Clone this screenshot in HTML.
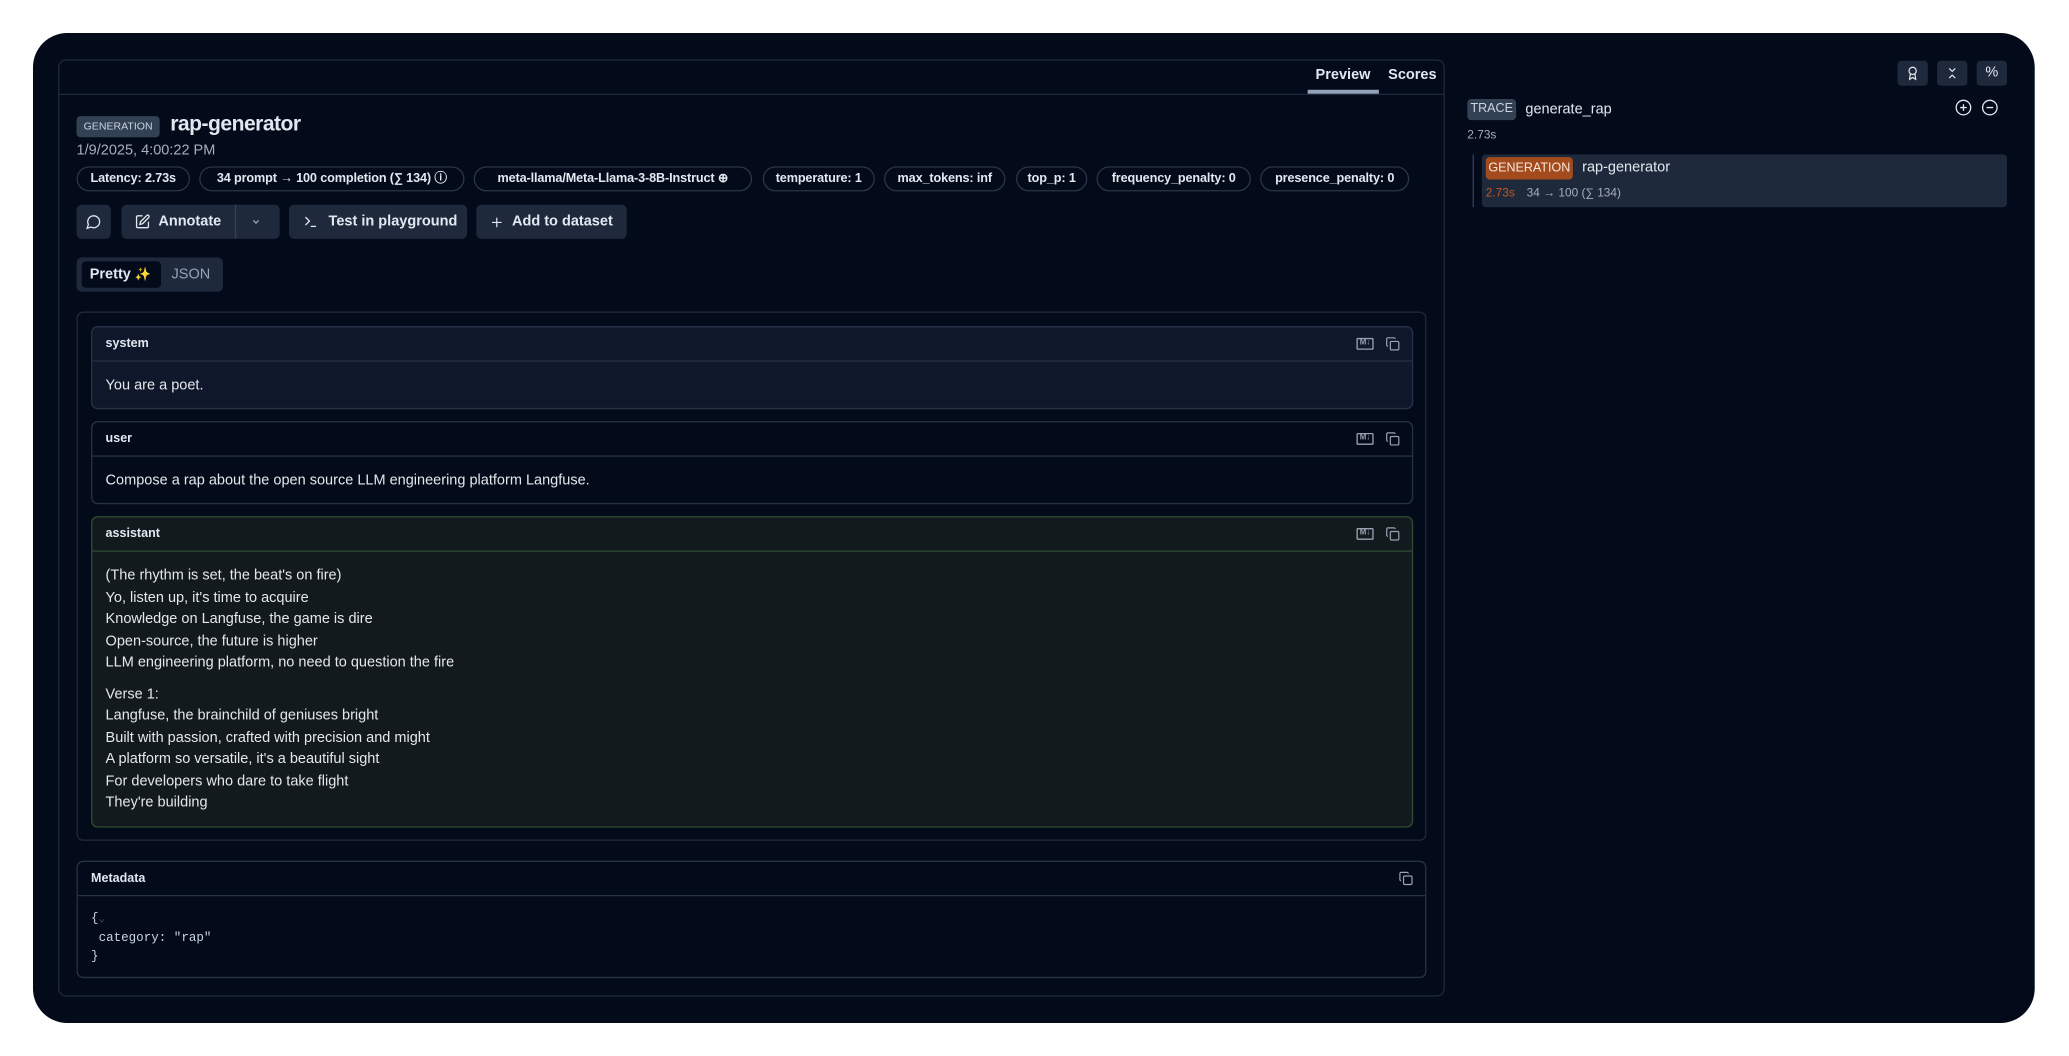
<!DOCTYPE html>
<html><head><meta charset="utf-8"><style>
*{box-sizing:border-box;margin:0;padding:0}
html,body{width:2069px;height:1056px;background:#fff;overflow:hidden}
#w{position:absolute;left:0;top:0;width:1568px;height:800px;transform:scale(1.31952,1.32);transform-origin:0 0;font-family:"Liberation Sans",sans-serif;color:#e2e8f0;white-space:nowrap}
.a{position:absolute}
.card{left:25px;top:25px;width:1517px;height:750px;background:#030a19;border-radius:26px}
.lp{left:44px;top:45px;width:1051px;height:710px;border:1px solid #1e293b;border-radius:6px}
.pill{position:absolute;top:126px;height:19px;border:1px solid #2a3547;border-radius:10px;font-size:9.6px;font-weight:bold;line-height:17px;text-align:center;color:#e2e8f0;letter-spacing:-0.1px}
.btn{position:absolute;top:155px;height:26px;background:#1e293b;border-radius:4px;font-size:11px;font-weight:bold;line-height:26px;color:#e2e8f0}
.box{position:absolute;left:69px;width:1002px;border:1px solid #263246;border-radius:5px}
.hd{height:26px;border-bottom:1px solid #263246;font-size:9.5px;font-weight:bold;padding-left:10px;line-height:25px;position:relative}
.bd{font-size:11px;padding-left:10px;color:#e5e7eb}
.ic{position:absolute;top:7px}
.md{right:29px;width:13px;height:9px;border:1px solid #9aa3b2;border-radius:1px;font-size:6px;line-height:7px;text-align:center;color:#9aa3b2;top:8px}
.cp{right:9px}
.ib{position:absolute;top:46px;width:23px;height:19px;background:#1e293b;border-radius:3px}
</style></head><body><div id="w">
<div class="a card"></div>
<div class="a lp"></div>
<div class="a" style="left:45px;top:71px;width:1049px;height:1px;background:#1e293b"></div>
<div class="a" style="left:997px;top:51px;font-size:11px;font-weight:bold">Preview</div>
<div class="a" style="left:991px;top:68px;width:54px;height:3px;background:#94a3b8"></div>
<div class="a" style="left:1052px;top:51px;font-size:11px;font-weight:bold">Scores</div>

<div class="a" style="left:58px;top:88px;width:63px;height:16px;background:#334155;border-radius:3px;font-size:8px;line-height:16px;text-align:center;color:#cbd5e1">GENERATION</div>
<div class="a" style="left:129px;top:86px;font-size:16px;font-weight:bold;letter-spacing:-0.4px">rap-generator</div>
<div class="a" style="left:58px;top:108px;font-size:11px;color:#a6afbd">1/9/2025, 4:00:22 PM</div>

<div class="pill" style="left:58px;width:86px">Latency: 2.73s</div>
<div class="pill" style="left:151px;width:201px">34 prompt → 100 completion (∑ 134) ⓘ</div>
<div class="pill" style="left:359px;width:211px">meta-llama/Meta-Llama-3-8B-Instruct ⊕</div>
<div class="pill" style="left:578px;width:85px">temperature: 1</div>
<div class="pill" style="left:670px;width:92px">max_tokens: inf</div>
<div class="pill" style="left:770px;width:54px">top_p: 1</div>
<div class="pill" style="left:831px;width:117px">frequency_penalty: 0</div>
<div class="pill" style="left:955px;width:113px">presence_penalty: 0</div>

<div class="btn" style="left:58px;width:26px"><svg class="a" style="left:7px;top:7px" width="12" height="12" viewBox="0 0 24 24" fill="none" stroke="#e2e8f0" stroke-width="2"><path d="M7.9 20A9 9 0 1 0 4 16.1L2 22Z"/></svg></div>
<div class="btn" style="left:92px;width:120px;padding-left:28px">Annotate<svg class="a" style="left:10px;top:7px" width="12" height="12" viewBox="0 0 24 24" fill="none" stroke="#e2e8f0" stroke-width="2"><path d="M12 3H5a2 2 0 0 0-2 2v14a2 2 0 0 0 2 2h14a2 2 0 0 0 2-2v-7"/><path d="M18.4 2.6a2.1 2.1 0 0 1 3 3L12 15l-4 1 1-4Z"/></svg><div class="a" style="left:86px;top:0;width:1px;height:26px;background:#334155"></div><svg class="a" style="left:98px;top:10px" width="8" height="6" viewBox="0 0 8 6" fill="none" stroke="#94a3b8" stroke-width="1"><path d="M2 2l2 2 2-2"/></svg></div>
<div class="btn" style="left:219px;width:135px;padding-left:30px">Test in playground<svg class="a" style="left:10px;top:7px" width="13" height="12" viewBox="0 0 24 24" fill="none" stroke="#e2e8f0" stroke-width="2"><path d="M4 17l6-6-6-6M12 19h8"/></svg></div>
<div class="btn" style="left:361px;width:114px;padding-left:27px">Add to dataset<svg class="a" style="left:10px;top:8px" width="11" height="11" viewBox="0 0 24 24" fill="none" stroke="#e2e8f0" stroke-width="2"><path d="M12 4v16M4 12h16"/></svg></div>

<div class="a" style="left:58px;top:195px;width:111px;height:26px;background:#1e293b;border-radius:4px"></div>
<div class="a" style="left:62px;top:198px;width:60px;height:20px;background:#030a19;border-radius:3px;font-size:11px;font-weight:bold;line-height:20px;padding-left:6px">Pretty <span style="color:#f59e0b;font-size:10px">✨</span></div>
<div class="a" style="left:130px;top:202px;font-size:11px;color:#94a3b8">JSON</div>

<div class="a" style="left:58px;top:236px;width:1023px;height:401px;border:1px solid #1e293b;border-radius:5px"></div>

<div class="box" style="top:247px;height:63px;background:#0f172a"><div class="hd">system<div class="ic md">M↓</div><svg class="ic cp" width="11" height="11" viewBox="0 0 24 24" fill="none" stroke="#9aa3b2" stroke-width="2"><rect x="8" y="8" width="14" height="14" rx="2"/><path d="M4 16c-1 0-2-1-2-2V4c0-1 1-2 2-2h10c1 0 2 1 2 2"/></svg></div><div class="bd" style="line-height:36px">You are a poet.</div></div>
<div class="box" style="top:319px;height:63px;background:#030a19"><div class="hd">user<div class="ic md">M↓</div><svg class="ic cp" width="11" height="11" viewBox="0 0 24 24" fill="none" stroke="#9aa3b2" stroke-width="2"><rect x="8" y="8" width="14" height="14" rx="2"/><path d="M4 16c-1 0-2-1-2-2V4c0-1 1-2 2-2h10c1 0 2 1 2 2"/></svg></div><div class="bd" style="line-height:36px">Compose a rap about the open source LLM engineering platform Langfuse.</div></div>
<div class="box" style="top:391px;height:236px;background:#121a1e;border-color:#2f4a33"><div class="hd" style="border-color:#2f4a33">assistant<div class="ic md">M↓</div><svg class="ic cp" width="11" height="11" viewBox="0 0 24 24" fill="none" stroke="#9aa3b2" stroke-width="2"><rect x="8" y="8" width="14" height="14" rx="2"/><path d="M4 16c-1 0-2-1-2-2V4c0-1 1-2 2-2h10c1 0 2 1 2 2"/></svg></div><div class="bd" style="line-height:16.5px;padding-top:10px">(The rhythm is set, the beat's on fire)<br>Yo, listen up, it's time to acquire<br>Knowledge on Langfuse, the game is dire<br>Open-source, the future is higher<br>LLM engineering platform, no need to question the fire<div style="height:7px"></div>Verse 1:<br>Langfuse, the brainchild of geniuses bright<br>Built with passion, crafted with precision and might<br>A platform so versatile, it's a beautiful sight<br>For developers who dare to take flight<br>They're building</div></div>

<div class="box" style="left:58px;width:1023px;top:652px;height:89px"><div class="hd">Metadata<svg class="ic cp" width="11" height="11" viewBox="0 0 24 24" fill="none" stroke="#9aa3b2" stroke-width="2"><rect x="8" y="8" width="14" height="14" rx="2"/><path d="M4 16c-1 0-2-1-2-2V4c0-1 1-2 2-2h10c1 0 2 1 2 2"/></svg></div><div style="font-family:'Liberation Mono',monospace;font-size:9.5px;line-height:14px;padding:10px 10px;color:#cbd5e1">{<span style="color:#475569;font-size:8px">⌄</span><br>&nbsp;category: "rap"<br>}</div></div>

<div class="ib" style="left:1438px"><svg class="a" style="left:6px;top:3px" width="11" height="13" viewBox="0 0 24 24" fill="none" stroke="#e2e8f0" stroke-width="2"><circle cx="12" cy="8" r="6"/><path d="M8.2 13L7 22l5-3 5 3-1.2-9"/></svg></div>
<div class="ib" style="left:1468px"><svg class="a" style="left:6px;top:3px" width="11" height="13" viewBox="0 0 24 24" fill="none" stroke="#e2e8f0" stroke-width="2"><path d="M7 20l5-5 5 5M7 4l5 5 5-5"/></svg></div>
<div class="ib" style="left:1498px;font-size:11px;line-height:19px;text-align:center">%</div>

<div class="a" style="left:1112px;top:75px;width:37px;height:16px;background:#334155;border-radius:3px;font-size:9.5px;line-height:16px;text-align:center;color:#cbd5e1">TRACE</div>
<div class="a" style="left:1156px;top:77px;font-size:11px">generate_rap</div>
<div class="a" style="left:1112px;top:97px;font-size:9px;color:#a6afbd">2.73s</div>
<svg class="a" style="left:1482px;top:75px" width="33" height="13" viewBox="0 0 33 13" fill="none" stroke="#e2e8f0" stroke-width="1"><circle cx="6" cy="6.5" r="5.5"/><path d="M3.5 6.5h5M6 4v5"/><circle cx="26" cy="6.5" r="5.5"/><path d="M23.5 6.5h5"/></svg>
<div class="a" style="left:1116px;top:117px;width:1px;height:40px;background:#334155"></div>
<div class="a" style="left:1123px;top:117px;width:398px;height:40px;background:#1e293b;border-radius:3px"></div>
<div class="a" style="left:1126px;top:119px;width:66px;height:17px;background:#a34b1c;border-radius:3px;font-size:9.5px;line-height:17px;text-align:center;color:#f5e6dc">GENERATION</div>
<div class="a" style="left:1199px;top:121px;font-size:11px">rap-generator</div>
<div class="a" style="left:1126px;top:141px;font-size:9px;color:#c2581d">2.73s</div>
<div class="a" style="left:1157px;top:141px;font-size:9px;color:#a6afbd">34 → 100 (∑ 134)</div>
</div></body></html>
